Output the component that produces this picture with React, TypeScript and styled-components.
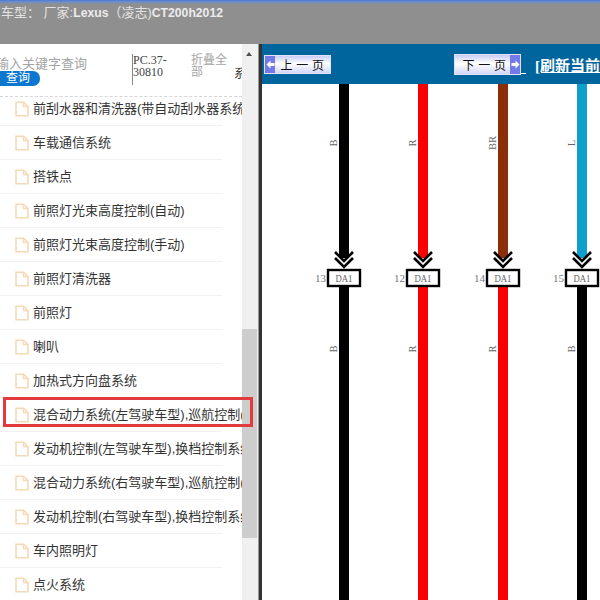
import React from "react";
import styled, { createGlobalStyle } from "styled-components";

const Global = createGlobalStyle`
  html, body { margin: 0; padding: 0; width: 600px; height: 600px; overflow: hidden; background: #fff; }
  #root { width: 600px; height: 600px; }
`;

const Page = styled.div`
  width: 600px;
  height: 600px;
  display: flex;
  flex-direction: column;
  overflow: hidden;
  position: relative;
  font-family: "Liberation Sans", "Noto Sans CJK SC", sans-serif;
`;

const TopBar = styled.header`
  height: 44px;
  flex: none;
  box-sizing: border-box;
  background: linear-gradient(#4f78cc 0, #6f8fd0 2px, #8f8f8f 4px, #8f8f8f 100%);
  color: #e4e4e4;
  font-size: 13px;
  font-weight: 400;
  line-height: 16px;
  padding: 5px 0 0 1px;
  white-space: nowrap;
`;

const TopLatin = styled.b`
  font-size: 12.2px;
  font-weight: 700;
  color: #ececec;
`;

const Body = styled.div`
  flex: 1;
  display: flex;
  min-height: 0;
`;

const Side = styled.aside`
  width: 242px;
  flex: none;
  display: flex;
  flex-direction: column;
  overflow: hidden;
`;

const SearchRow = styled.div`
  height: 53px;
  flex: none;
  position: relative;
  box-sizing: border-box;
  border-bottom: 1px dashed #d6d6d6;
  overflow: hidden;
`;

const Placeholder = styled.span`
  position: absolute;
  left: -4px;
  top: 12px;
  font-size: 13px;
  line-height: 16px;
  color: #a3a3a3;
  white-space: nowrap;
`;

const QueryButton = styled.span`
  position: absolute;
  left: -4px;
  top: 27px;
  width: 44px;
  height: 15px;
  border-radius: 0 7px 7px 0;
  background: #0c77cf;
  color: #fff;
  font-size: 12px;
  line-height: 15px;
  text-align: center;
`;

const PartCode = styled.span`
  position: absolute;
  left: 132px;
  top: 10px;
  width: 40px;
  height: 31px;
  border-left: 1px solid #888;
  font-family: "Liberation Serif", serif;
  font-size: 12px;
  line-height: 12px;
  color: #444;
`;

const Collapse = styled.span`
  position: absolute;
  left: 191px;
  top: 10px;
  width: 40px;
  font-size: 12px;
  line-height: 12px;
  color: #a5a5a5;
`;

const CutLabel = styled.span`
  position: absolute;
  left: 234px;
  top: 23px;
  font-size: 12px;
  line-height: 14px;
  color: #333;
`;

const List = styled.ul`
  list-style: none;
  margin: 0;
  padding: 0;
  flex: 1;
  overflow: hidden;
`;

const Row = styled.li`
  height: 34px;
  width: 222px;
  box-sizing: border-box;
  display: flex;
  align-items: center;
  gap: 4px;
  padding: 0 0 0 15px;
  border-bottom: 1px solid #f1f1f1;

  &:first-child {
    height: 29px;
    padding-bottom: 5px;
  }
`;

const RowLabel = styled.span`
  width: 209px;
  flex: none;
  overflow: hidden;
  white-space: nowrap;
  font-size: 13px;
  line-height: 16px;
  color: #333;
`;

const Highlight = styled.div`
  position: absolute;
  left: 3px;
  top: 397px;
  width: 250px;
  height: 30px;
  box-sizing: border-box;
  border: 3px solid #e33a3e;
  pointer-events: none;
`;

const Track = styled.div`
  width: 16px;
  flex: none;
  background: #f0f0f0;
  position: relative;
`;

const Arrow = styled.div`
  position: absolute;
  left: 4px;
  top: 8px;
  width: 0;
  height: 0;
  border-left: 3.5px solid transparent;
  border-right: 3.5px solid transparent;
  border-bottom: 4px solid #505050;
`;

const Thumb = styled.div`
  position: absolute;
  left: 0;
  top: 285px;
  width: 15px;
  height: 209px;
  background: #cdcdcd;
`;

const Splitter = styled.div`
  width: 4px;
  flex: none;
  background: linear-gradient(90deg, #999 0, #999 25%, #333 25%, #333 100%);
`;

const Main = styled.main`
  flex: 1;
  min-width: 0;
  display: flex;
  flex-direction: column;
  overflow: hidden;
`;

const Toolbar = styled.div`
  height: 40px;
  flex: none;
  background: #00659c;
  display: flex;
  align-items: center;
  white-space: nowrap;
`;

const PageBtn = styled.button<{ $next?: boolean }>`
  width: ${(p) => (p.$next ? 68 : 67)}px;
  height: ${(p) => (p.$next ? 21 : 19)}px;
  margin: 0 0 0 ${(p) => (p.$next ? 123 : 2)}px;
  padding: 0;
  border: 1px solid #dfe3fa;
  display: flex;
  flex-direction: ${(p) => (p.$next ? "row-reverse" : "row")};
  align-items: stretch;
  background: linear-gradient(#c9cdf5, #ffffff 45%, #d2d6f8);
  font-family: "Noto Sans CJK SC", sans-serif;
  font-size: 12px;
  color: #111;
  cursor: pointer;
`;

const BtnCap = styled.span`
  width: 10px;
  flex: none;
  background: #7379e6;
  display: flex;
  align-items: center;
  justify-content: center;
`;

const BtnText = styled.span<{ $next?: boolean }>`
  flex: 1;
  align-self: center;
  line-height: 17px;
  text-align: center;
  word-spacing: 1px;
  padding-left: ${(p) => (p.$next ? 4 : 0)}px;
`;

const BtnTail = styled.span`
  width: 5px;
  height: 1px;
  flex: none;
  margin-top: 18px;
  background: #fff;
`;

const Refresh = styled.a`
  margin-left: 9px;
  font-family: "Liberation Serif", "Noto Sans CJK SC", serif;
  font-size: 15px;
  font-weight: 700;
  color: #fff;
  text-decoration: underline;
`;

const Diagram = styled.div`
  flex: 1;
  min-height: 0;
  background: #fff;
`;

const DiagramSvg = styled.svg`
  display: block;
  width: 338px;
  height: 516px;
`;

const items = [
  "前刮水器和清洗器(带自动刮水器系统)",
  "车载通信系统",
  "搭铁点",
  "前照灯光束高度控制(自动)",
  "前照灯光束高度控制(手动)",
  "前照灯清洗器",
  "前照灯",
  "喇叭",
  "加热式方向盘系统",
  "混合动力系统(左驾驶车型),巡航控制(",
  "发动机控制(左驾驶车型),换档控制系统",
  "混合动力系统(右驾驶车型),巡航控制(",
  "发动机控制(右驾驶车型),换档控制系统",
  "车内照明灯",
  "点火系统",
];

const wires = [
  { x: 82, top: "#000", bottom: "#000", topLabel: "B", bottomLabel: "B", pin: "13" },
  { x: 161, top: "#fb0000", bottom: "#fb0000", topLabel: "R", bottomLabel: "R", pin: "12" },
  { x: 241, top: "#8a2f08", bottom: "#fb0000", topLabel: "BR", bottomLabel: "R", pin: "14" },
  { x: 320, top: "#0ea0cc", bottom: "#000", topLabel: "L", bottomLabel: "B", pin: "15" },
];

const DocIcon = () => (
  <svg width="14" height="16" viewBox="0 0 14 16" fill="none" style={{ flex: "none" }}>
    <path d="M1 1.2h7.5L13 5.5v9.3H1z" fill="#fff" stroke="#f6d9b5" strokeWidth="1.6" />
    <path d="M8.5 1.2v4.3H13" stroke="#f6d9b5" strokeWidth="1.4" />
  </svg>
);

const ArrowGlyph = ({ dir }: { dir: "l" | "r" }) => (
  <svg width="9" height="11" viewBox="0 0 9 11">
    <path
      d={dir === "l" ? "M0.5 5.5L4.5 1.5V4H8.5V7H4.5V9.5z" : "M8.5 5.5L4.5 1.5V4H0.5V7H4.5V9.5z"}
      fill="#fff"
    />
  </svg>
);

export default function App() {
  return (
    <Page>
      <Global />
      <TopBar>
        车型： 厂家:<TopLatin>Lexus</TopLatin>（凌志)<TopLatin>CT200h2012</TopLatin>
      </TopBar>
      <Body>
        <Side>
          <SearchRow>
            <Placeholder>输入关键字查询</Placeholder>
            <QueryButton>查询</QueryButton>
            <PartCode>PC.37-<br />30810</PartCode>
            <Collapse>折叠全部</Collapse>
            <CutLabel>系</CutLabel>
          </SearchRow>
          <List>
            {items.map((t) => (
              <Row key={t}>
                <DocIcon />
                <RowLabel>{t}</RowLabel>
              </Row>
            ))}
          </List>
        </Side>
        <Track>
          <Arrow />
          <Thumb />
        </Track>
        <Splitter />
        <Main>
          <Toolbar>
            <PageBtn>
              <BtnCap><ArrowGlyph dir="l" /></BtnCap>
              <BtnText>上 一 页</BtnText>
            </PageBtn>
            <PageBtn $next>
              <BtnCap><ArrowGlyph dir="r" /></BtnCap>
              <BtnText $next>下 一 页</BtnText>
            </PageBtn>
            <BtnTail />
            <Refresh>[刷新当前</Refresh>
          </Toolbar>
          <Diagram>
            <DiagramSvg viewBox="0 0 338 516">
              {wires.map((w) => (
                <g key={w.pin}>
                  <rect x={w.x - 5} y={0} width={10} height={174} fill={w.top} />
                  <rect x={w.x - 5} y={200} width={10} height={316} fill={w.bottom} />
                  <path
                    d={`M${w.x - 9} 168L${w.x} 177L${w.x + 9} 168M${w.x - 9} 174L${w.x} 183L${w.x + 9} 174`}
                    fill="none"
                    stroke="#000"
                    strokeWidth="2.6"
                  />
                  <rect x={w.x - 16} y={186} width={32} height={16} fill="#fff" stroke="#000" strokeWidth="2.4" />
                  <text
                    x={w.x}
                    y={198}
                    textAnchor="middle"
                    fontFamily="Liberation Serif, serif"
                    fontSize="10.5"
                    textLength={17}
                    lengthAdjust="spacingAndGlyphs"
                    fill="#666"
                  >DA1</text>
                  <text x={w.x - 18} y={198} textAnchor="end" fontFamily="Liberation Serif, serif" fontSize="11" fill="#777">{w.pin}</text>
                  <text
                    transform={`translate(${w.x - 7} 59) rotate(-90)`}
                    textAnchor="middle"
                    fontFamily="Liberation Serif, serif"
                    fontSize="10.5"
                    fill="#666"
                  >{w.topLabel}</text>
                  <text
                    transform={`translate(${w.x - 7} 265) rotate(-90)`}
                    textAnchor="middle"
                    fontFamily="Liberation Serif, serif"
                    fontSize="10.5"
                    fill="#666"
                  >{w.bottomLabel}</text>
                </g>
              ))}
            </DiagramSvg>
          </Diagram>
        </Main>
      </Body>
      <Highlight />
    </Page>
  );
}
